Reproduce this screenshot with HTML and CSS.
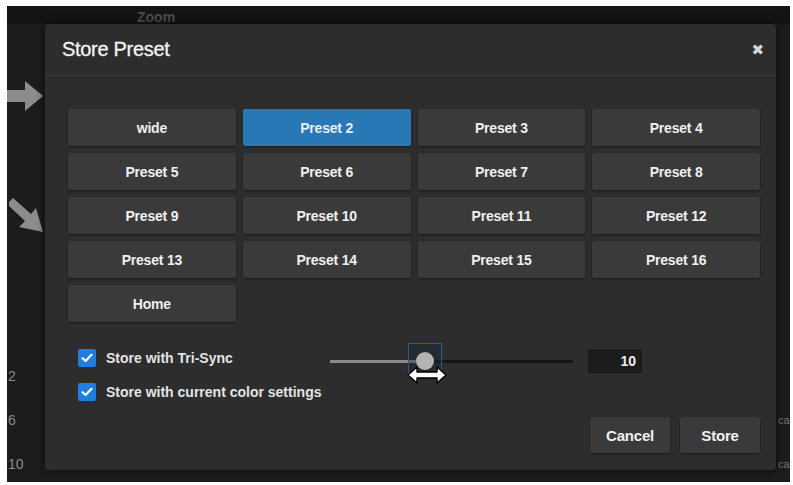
FILE: index.html
```html
<!DOCTYPE html>
<html>
<head>
<meta charset="utf-8">
<link rel="stylesheet" href="styles.css">
</head>
<body>
<div class="screen">
  <div class="bg-top"><span class="bg-zoom">Zoom</span></div>
  <svg class="bg-arrow-right" width="40" height="34" viewBox="0 0 40 34"><path d="M0 11 H20 V2 L38 17 L20 32 V23 H0 Z" fill="#8c8c8c"/></svg>
  <svg class="bg-arrow-diag" width="40" height="44" viewBox="0 0 40 44"><path d="M4 4 L22 20 L27 14 L34 38 L10 33 L16 27 L-2 10 Z" fill="#8c8c8c"/></svg>
  <span class="bg-num n1">2</span>
  <span class="bg-num n2">6</span>
  <span class="bg-num n3">10</span>
  <span class="bg-ca c1">ca</span>
  <span class="bg-ca c2">ca</span>

  <div class="modal">
    <div class="modal-header">
      <h1 class="modal-title">Store Preset</h1>
      <span class="modal-close">✖</span>
    </div>
    <div class="modal-body">
      <div class="preset-grid">
        <button class="preset">wide</button>
        <button class="preset active">Preset 2</button>
        <button class="preset">Preset 3</button>
        <button class="preset">Preset 4</button>
        <button class="preset">Preset 5</button>
        <button class="preset">Preset 6</button>
        <button class="preset">Preset 7</button>
        <button class="preset">Preset 8</button>
        <button class="preset">Preset 9</button>
        <button class="preset">Preset 10</button>
        <button class="preset">Preset 11</button>
        <button class="preset">Preset 12</button>
        <button class="preset">Preset 13</button>
        <button class="preset">Preset 14</button>
        <button class="preset">Preset 15</button>
        <button class="preset">Preset 16</button>
        <button class="preset">Home</button>
      </div>
      <div class="options">
        <div class="opt-row">
          <label class="check"><span class="box"><svg width="12" height="10" viewBox="0 0 12 10"><path d="M1.5 5.2 L4.6 8 L10.5 1.8" fill="none" stroke="#fff" stroke-width="2.2" stroke-linecap="round" stroke-linejoin="round"/></svg></span>Store with Tri-Sync</label>
          <div class="slider">
            <div class="track-fill"></div>
            <div class="thumb-focus"></div>
            <div class="thumb"></div>
            <svg class="cursor" width="42" height="22" viewBox="0 0 42 22"><path d="M2 11 L11 3 V8 H31 V3 L40 11 L31 19 V14 H11 V19 Z" fill="#fff" stroke="#000" stroke-width="1.4" stroke-linejoin="round"/></svg>
          </div>
          <div class="value">10</div>
        </div>
        <div class="opt-row">
          <label class="check"><span class="box"><svg width="12" height="10" viewBox="0 0 12 10"><path d="M1.5 5.2 L4.6 8 L10.5 1.8" fill="none" stroke="#fff" stroke-width="2.2" stroke-linecap="round" stroke-linejoin="round"/></svg></span>Store with current color settings</label>
        </div>
      </div>
      <div class="modal-footer">
        <button class="btn">Cancel</button>
        <button class="btn">Store</button>
      </div>
    </div>
  </div>
</div>
</body>
</html>
```
FILE: styles.css
```css
* { box-sizing: border-box; }
html, body { margin: 0; padding: 0; background: #fff; }
body { font-family: "Liberation Sans", Arial, sans-serif; }

.screen {
  position: relative;
  margin: 6px 0 0 7px;
  width: 783px;
  height: 476px;
  background: #1c1c1c;
  overflow: hidden;
}
.bg-top {
  height: 18px;
  background: #141414;
  padding-left: 130px;
}
.bg-zoom {
  display: inline-block;
  font-size: 14px;
  font-weight: bold;
  color: #4c4c4c;
  line-height: 22px;
}
.bg-arrow-right { position: absolute; left: -2px; top: 73px; }
.bg-arrow-diag { position: absolute; left: 2px; top: 188px; }
.bg-num {
  position: absolute;
  left: 1px;
  font-size: 14px;
  color: #8a8a8a;
}
.n1 { top: 362px; }
.n2 { top: 406px; }
.n3 { top: 450px; }
.bg-ca {
  position: absolute;
  left: 771px;
  font-size: 11px;
  color: #777;
}
.c1 { top: 408px; }
.c2 { top: 452px; }

.modal {
  position: absolute;
  left: 38px;
  top: 18px;
  width: 731px;
  height: 446px;
  background: #2d2d2d;
  border-radius: 4px;
  box-shadow: 0 0 8px rgba(0,0,0,0.6);
  display: flex;
  flex-direction: column;
}
.modal-header {
  height: 52px;
  border-bottom: 1px solid #373737;
  display: flex;
  align-items: center;
  justify-content: space-between;
  padding: 0 12px 0 17px;
}
.modal-title {
  margin: 0;
  font-size: 20px;
  font-weight: normal;
  color: #f4f4f4;
  letter-spacing: -0.3px;
  -webkit-text-stroke: 0.3px #f4f4f4;
}
.modal-close {
  font-size: 15px;
  color: #d8d8d8;
  font-family: "DejaVu Sans", sans-serif;
}
.modal-body {
  flex: 1;
  padding: 33px 16px 17px 23px;
  display: flex;
  flex-direction: column;
}
.preset-grid {
  display: grid;
  grid-template-columns: repeat(4, 1fr);
  grid-auto-rows: 37px;
  gap: 7px 7px;
}
.preset, .btn {
  border: none;
  background: #3a3a3a;
  color: #f0f0f0;
  font-family: "Liberation Sans", Arial, sans-serif;
  font-weight: bold;
  font-size: 14px;
  letter-spacing: -0.2px;
  border-radius: 2px;
  box-shadow: 0 1px 2px rgba(0,0,0,0.45);
  padding: 0;
}
.preset.active {
  background: #2878b5;
  color: #e6f0f8;
}
.options {
  margin-top: 27px;
  padding-left: 10px;
  display: flex;
  flex-direction: column;
  gap: 16px;
}
.opt-row {
  display: flex;
  align-items: center;
  height: 18px;
}
.check {
  display: flex;
  align-items: center;
  gap: 10px;
  font-size: 14px;
  font-weight: bold;
  color: #e4e4e4;
  width: 252px;
  flex: 0 0 252px;
}
.box {
  width: 18px;
  height: 18px;
  background: #1f7fe0;
  border-radius: 2px;
  display: flex;
  align-items: center;
  justify-content: center;
}
.slider {
  position: relative;
  width: 243px;
  height: 3px;
  margin-top: 6px;
  background: #161616;
}
.track-fill {
  width: 86px;
  height: 3px;
  background: #8a8a8a;
}
.thumb {
  position: absolute;
  left: 86px;
  top: -8px;
  width: 18px;
  height: 18px;
  border-radius: 50%;
  background: #b3b3b3;
}
.thumb-focus {
  position: absolute;
  left: 78px;
  top: -17px;
  width: 34px;
  height: 34px;
  border: 1px solid #2c5a82;
  background: rgba(20,40,60,0.35);
}
.cursor {
  position: absolute;
  left: 76px;
  top: 4px;
}
.value {
  margin-left: 15px;
  margin-top: 6px;
  width: 54px;
  height: 24px;
  background: #1c1c1c;
  color: #eee;
  font-weight: bold;
  font-size: 14px;
  text-align: right;
  padding-right: 6px;
  line-height: 24px;
}
.modal-footer {
  margin-top: auto;
  display: flex;
  justify-content: flex-end;
  gap: 10px;
}
.btn {
  height: 36px;
  width: 80px;
  font-size: 15px;
}
```
